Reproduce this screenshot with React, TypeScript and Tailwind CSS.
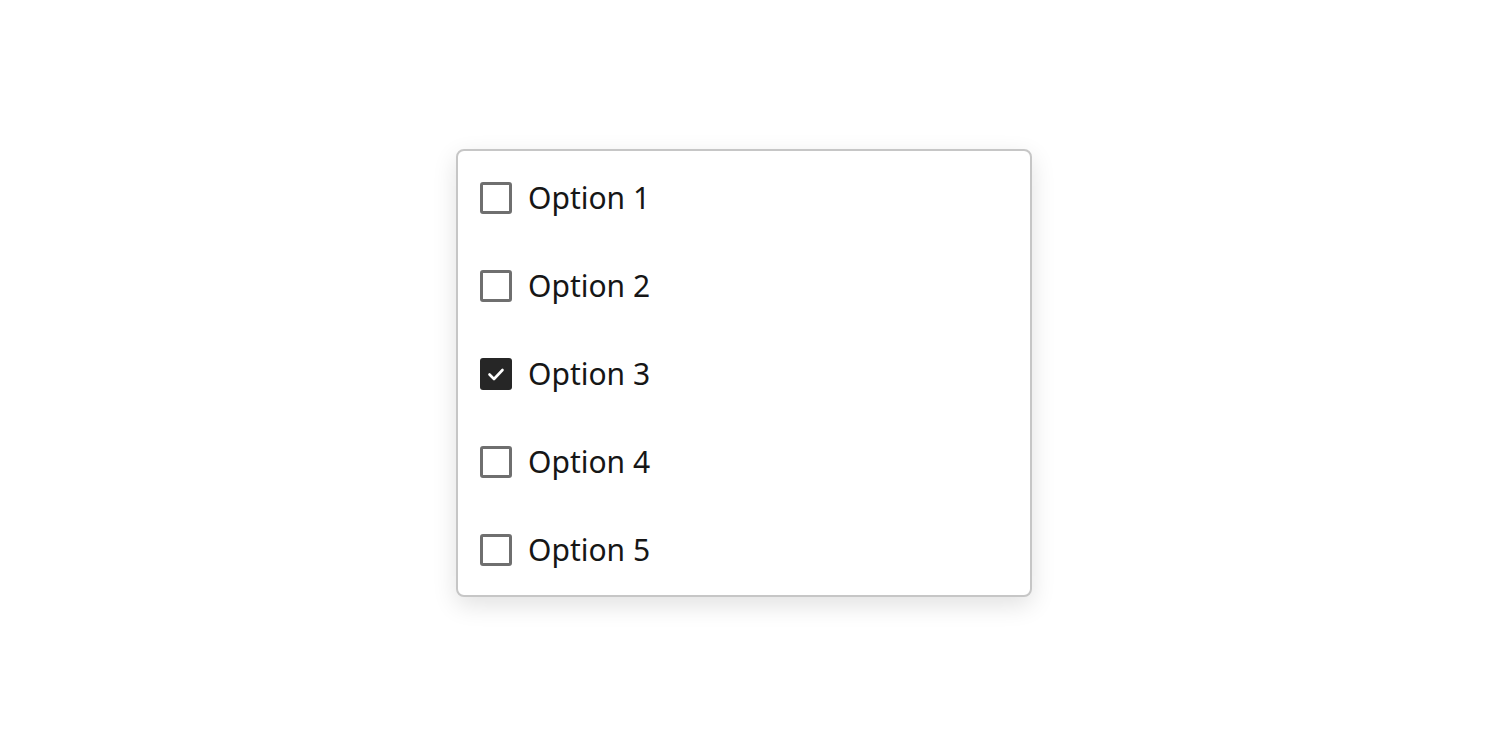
import { useState } from "react";

const options = ["Option 1", "Option 2", "Option 3", "Option 4", "Option 5"];

export default function App() {
	const [checked, setChecked] = useState<string[]>(["Option 3"]);

	const toggle = (o: string) =>
		setChecked((c) => (c.includes(o) ? c.filter((x) => x !== o) : [...c, o]));

	return (
		<div className="w-[1488px] h-[745px] bg-white flex justify-center pt-[149px] font-['Noto_Sans',sans-serif]">
			<div className="w-[576px] h-[448px] border-2 border-[#c6c6c6] rounded-[8px] bg-white shadow-[0_8px_24px_rgba(0,0,0,0.12)] pt-[3px] flex flex-col">
				{options.map((o) => {
					const on = checked.includes(o);
					return (
						<label key={o} className="h-[88px] flex items-center gap-4 pl-[22px] cursor-pointer">
							<span
								onClick={() => toggle(o)}
								className={`w-[32px] h-[32px] rounded-[3px] flex items-center justify-center ${
									on ? "bg-[#262626]" : "border-[3px] border-[#6f6f6f]"
								}`}
							>
								{on && (
									<svg width="24" height="24" viewBox="0 0 24 24" fill="none">
										<path d="M5.5 12.5l4.5 4.5 8.5-9" stroke="white" strokeWidth="2.6" strokeLinecap="round" strokeLinejoin="round" />
									</svg>
								)}
							</span>
							<span className="text-[30px] text-[#161616] leading-none">{o}</span>
						</label>
					);
				})}
			</div>
		</div>
	);
}
